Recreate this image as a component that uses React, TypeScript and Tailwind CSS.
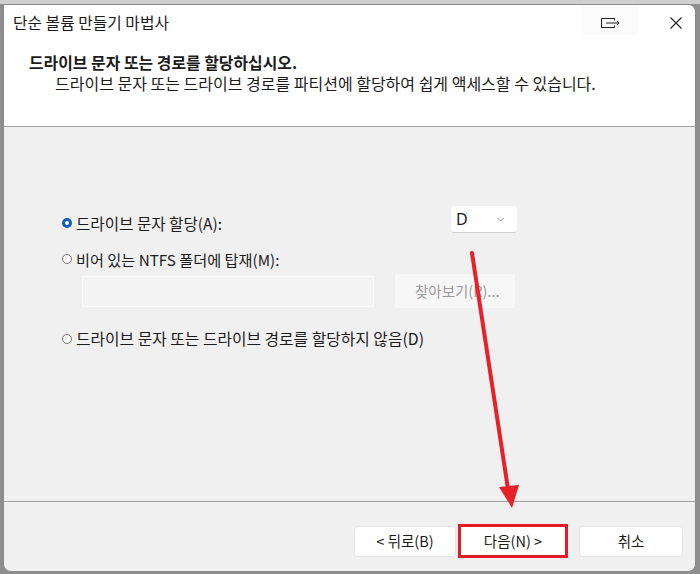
import React from "react";

function Radio({ checked }: { checked?: boolean }) {
  return checked ? (
    <span className="w-[10px] h-[10px] rounded-full border-[3px] border-[#0f5fb8] bg-white shrink-0" />
  ) : (
    <span className="w-[10px] h-[10px] rounded-full border border-[#707070] bg-white shrink-0" />
  );
}

export default function App() {
  return (
    <div className="relative w-[700px] h-[574px] bg-[#8e8e8e] overflow-hidden font-['Noto_Sans_CJK_KR','Noto_Sans',sans-serif] text-[#1b1b1b] text-[14.5px]">
      <div className="h-[4px] bg-[#cfcfcf]" />
      <div className="ml-[3px] w-[693px] h-[568px] flex flex-col border border-[#8a8a8a] rounded-tr-[8px] rounded-b-[8px] overflow-hidden bg-[#f0f0f0]">
        {/* header */}
        <div className="h-[122px] bg-white border-b border-[#a0a0a0] flex flex-col">
          <div className="h-[36px] flex items-center pl-[9px] relative">
            <span className="text-[15.8px] leading-[20px]">단순 볼륨 만들기 마법사</span>
            <div className="ml-auto flex items-center h-full">
              <div className="w-[57px] h-[30px] mt-[-6px] pt-[6px] flex items-center justify-center bg-[#fbfbfb]">
                <svg width="19" height="11" viewBox="0 0 19 11" fill="none" stroke="#222" strokeWidth="1">
                  <path d="M13.5 0.5H0.5V9.5H13.5" />
                  <path d="M13.5 0.5V2.5" />
                  <path d="M13.5 7.5V9.5" />
                  <path d="M5 5H18" />
                  <path d="M16 3L18 5L16 7" />
                </svg>
              </div>
              <div className="w-[18px]" />
              <div className="w-[38px] flex items-center justify-center">
                <svg width="12" height="12" viewBox="0 0 12 12" fill="none" stroke="#222" strokeWidth="1.1">
                  <path d="M0.5 0.5L11.5 11.5M11.5 0.5L0.5 11.5" />
                </svg>
              </div>
            </div>
          </div>
          <div className="mt-[12px] pl-[25px] font-bold leading-[20px] text-[15.9px]">드라이브 문자 또는 경로를 할당하십시오.</div>
          <div className="pl-[51px] leading-[20px] text-[16px]">드라이브 문자 또는 드라이브 경로를 파티션에 할당하여 쉽게 액세스할 수 있습니다.</div>
        </div>

        {/* body */}
        <div className="h-[375px] border-b border-[#a0a0a0] pt-[79px] pl-[58px] text-[15.6px]">
          <div className="w-[455px] flex items-end justify-between h-[27px]">
            <div className="flex items-center gap-[4px] leading-[20px]">
              <Radio checked />
              <span>드라이브 문자 할당(A):</span>
            </div>
            <div className="w-[66px] h-[27px] bg-white rounded-[3px] border-b border-[#cfcfcf] flex items-center pl-[5px] pr-[13px] justify-between">
              <span className="text-[16px] font-['Noto_Sans',sans-serif]">D</span>
              <svg width="7" height="5" viewBox="0 0 7 5" fill="none" stroke="#888" strokeWidth="1">
                <path d="M0.5 1L3.5 4L6.5 1" />
              </svg>
            </div>
          </div>
          <div className="mt-[16px] flex items-center gap-[4px] leading-[20px]">
            <Radio />
            <span className="text-[15.2px]">비어 있는 NTFS 폴더에 탑재(M):</span>
          </div>
          <div className="mt-[4px] flex items-center pl-[20px] gap-[20px]">
            <div className="w-[292px] h-[31px] bg-[#f3f3f3] border border-[#fafafa]" />
            <div className="w-[122px] h-[36px] bg-[#f7f7f7] border border-[#efefef] rounded-[3px] flex items-center pl-[20px] text-[#9a9a9a] text-[14.5px]">
              찾아보기(R)...
            </div>
          </div>
          <div className="mt-[20px] flex items-center gap-[4px] leading-[20px]">
            <Radio />
            <span className="text-[15.8px]">드라이브 문자 또는 드라이브 경로를 할당하지 않음(D)</span>
          </div>
        </div>

        {/* footer */}
        <div className="flex-1 flex justify-end items-start pt-[22px] pr-[12px]">
          <div className="flex items-center">
            <div className="w-[102px] h-[31px] bg-white border border-[#e6e6e6] rounded-[4px] flex items-center justify-center">
              &lt; 뒤로(B)
            </div>
            <div className="ml-[2px] w-[110px] h-[34px] bg-white border-[3px] border-[#e11b2a] flex items-center justify-center">
              다음(N) &gt;
            </div>
            <div className="ml-[11px] w-[104px] h-[31px] bg-white border border-[#e6e6e6] rounded-[4px] flex items-center justify-center">
              취소
            </div>
          </div>
        </div>
      </div>

      <svg className="absolute inset-0 pointer-events-none" width="700" height="574" viewBox="0 0 700 574">
        <line x1="472" y1="253" x2="508" y2="489" stroke="#e8202a" strokeWidth="4" strokeLinecap="round" />
        <polygon points="499,487 519,485 512,508" fill="#e8202a" />
      </svg>
    </div>
  );
}
